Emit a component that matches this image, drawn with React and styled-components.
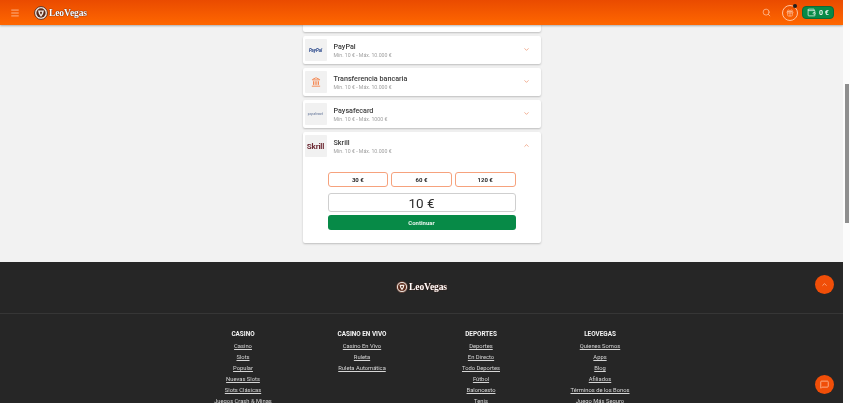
import React from 'react'
import styled, { createGlobalStyle } from 'styled-components'
import { Menu, Search, ChevronDown, ChevronUp, Landmark, Gift, Wallet, MessageSquare } from 'lucide-react'

const Global = createGlobalStyle`
  html, body {
    margin: 0;
    padding: 0;
    overflow: hidden;
  }
  body {
    font-family: Roboto, "Liberation Sans", sans-serif;
  }
`

const Shell = styled.div`
  position: relative;
  display: flex;
  width: 850px;
  height: 403px;
  overflow: hidden;
  background: #f2f2f2;
`

const Page = styled.div`
  position: relative;
  flex: 1;
  min-width: 0;
  height: 403px;
  overflow: hidden;
  will-change: opacity;
`

const Scrollbar = styled.div`
  flex: none;
  width: 7px;
  padding: 84px 1px 0 2px;
  box-sizing: border-box;
  background: #fcfcfc;
`

const Thumb = styled.div`
  width: 4px;
  height: 139px;
  background: #8f8f8f;
`

const Header = styled.header`
  position: absolute;
  top: 0;
  left: 0;
  right: 0;
  z-index: 5;
  height: 25px;
  display: flex;
  align-items: center;
  padding: 0 9px 0 10px;
  background: linear-gradient(180deg, #ea4b00 0%, #ff6700 100%);
  box-shadow: 0 1px 2px rgba(0, 0, 0, 0.3);
`

const Burger = styled.span`
  display: flex;
  color: #ffc4a0;
  margin-right: 14px;
`

const LogoMark = styled.span`
  display: flex;
  align-items: center;
  gap: 1px;
`

const LogoText = styled.span`
  font-family: "Liberation Serif", serif;
  font-weight: 700;
  font-size: ${p => p.$size}px;
  letter-spacing: -0.1px;
  color: #fff;
  text-shadow: 0 0 1px #4a2014, 0 0 1px #4a2014;
`

const HeaderRight = styled.div`
  margin-left: auto;
  display: flex;
  align-items: center;
`

const SearchIcon = styled.span`
  display: flex;
  color: #ffc4a0;
  margin-right: 11px;
`

const GiftButton = styled.span`
  position: relative;
  display: flex;
  align-items: center;
  justify-content: center;
  width: 14px;
  height: 14px;
  border: 1px solid #ffc4a0;
  border-radius: 50%;
  color: #ffc4a0;
  margin-right: 4px;
`

const GiftDot = styled.span`
  position: absolute;
  top: -2px;
  right: 0;
  width: 4px;
  height: 4px;
  border-radius: 50%;
  background: #1d1d1d;
`

const Balance = styled.span`
  display: flex;
  align-items: center;
  gap: 3px;
  height: 13px;
  width: 32px;
  box-sizing: border-box;
  padding-left: 4px;
  border-radius: 4px;
  background: #078a47;
  border: 1px solid #0b6b3a;
  color: #e6f5ec;
  font-size: 7px;
  font-weight: 700;
`

const Content = styled.main`
  width: 238px;
  margin: 0 auto;
  padding: 0 0 19px;
  display: flex;
  flex-direction: column;
  gap: 3.6px;
`

const Card = styled.section`
  background: #fff;
  border-radius: 2px;
  box-shadow: 0 1px 2px rgba(0, 0, 0, 0.22);
  flex: none;
  height: ${p => (p.$open ? '111px' : 'auto')};
  margin-top: ${p => p.$offset || 0}px;
`

const CardRow = styled.div`
  display: flex;
  align-items: center;
  height: 28.4px;
  padding: 0 11px 0 2px;
`

const LogoTile = styled.span`
  flex: none;
  width: 22px;
  height: 22px;
  display: flex;
  align-items: center;
  justify-content: center;
  background: #f1f1f1;
  border-radius: 1px;
  margin-right: 7px;
`

const MethodText = styled.div`
  flex: 1;
  display: flex;
  flex-direction: column;
  gap: 1px;
  padding-top: 1px;
`

const MethodName = styled.div`
  font-size: 7.2px;
  line-height: 9px;
  font-weight: 500;
  color: #3a3a3a;
`

const MethodLimit = styled.div`
  font-size: 5.2px;
  line-height: 7px;
  color: #a0a0a0;
`

const Chevron = styled.span`
  display: flex;
  color: #e9794a;
  margin-top: -2px;
`

const PayPalText = styled.span`
  font-size: 4.4px;
  font-weight: 700;
  font-style: italic;
  color: #1f3f86;
`

const PaysafeText = styled.span`
  font-size: 2.8px;
  font-weight: 500;
  color: #7b8aa8;
`

const SkrillText = styled.span`
  font-size: 8px;
  font-weight: 700;
  letter-spacing: -0.2px;
  color: #6e2b35;
`

const Deposit = styled.div`
  width: 188px;
  margin: 12px auto 0;
  display: flex;
  flex-direction: column;
`

const Amounts = styled.div`
  display: grid;
  grid-template-columns: repeat(3, 1fr);
  gap: 3px;
`

const Amount = styled.button`
  height: 15px;
  padding: 0;
  background: #fff;
  border: 1px solid #f6a27d;
  border-radius: 3px;
  font-family: inherit;
  font-size: 6px;
  font-weight: 700;
  color: #2a2a2a;
`

const AmountInput = styled.div`
  height: 19px;
  margin-top: 6px;
  box-sizing: border-box;
  display: flex;
  align-items: center;
  justify-content: center;
  border: 1px solid #cfcfcf;
  border-radius: 3px;
  font-size: 13.5px;
  color: #2d2d2d;
`

const Continue = styled.button`
  height: 15px;
  margin-top: 3px;
  padding: 0;
  border: 0;
  border-radius: 3px;
  background: #078a47;
  color: #e6f5ec;
  font-family: inherit;
  font-size: 6px;
  font-weight: 700;
`

const Footer = styled.footer`
  background: #262626;
  height: 300px;
`

const FooterLogo = styled.div`
  height: 51px;
  display: flex;
  align-items: center;
  justify-content: center;
  border-bottom: 1px solid #363636;
`

const FooterNav = styled.nav`
  display: grid;
  grid-template-columns: repeat(4, 119px);
  justify-content: center;
  padding-top: 15px;
`

const FooterCol = styled.div`
  display: flex;
  flex-direction: column;
  align-items: center;
`

const FooterHead = styled.div`
  font-size: 6.4px;
  line-height: 10px;
  margin-bottom: 2px;
  font-weight: 700;
  color: #f4f4f4;
`

const FooterLink = styled.a`
  font-size: 5.8px;
  line-height: 11.1px;
  color: #d6d6d6;
  text-decoration: underline;
  white-space: nowrap;
`

const Fab = styled.span`
  position: absolute;
  z-index: 6;
  left: 815px;
  top: ${p => p.$top}px;
  width: 19px;
  height: 19px;
  display: flex;
  align-items: center;
  justify-content: center;
  border-radius: 50%;
  background: #f04e08;
  color: #ffc9ac;
`

const Lion = ({ size }) => (
  <svg width={size} height={size} viewBox="0 0 24 24" aria-hidden="true">
    <circle cx="12" cy="12" r="11" fill="#f3ece6" stroke="#4a2014" strokeWidth="1.5" />
    <circle cx="12" cy="12" r="8" fill="#5a2a1a" />
    <path d="M7 7.5 L17 7.5 L15.5 13.5 L12 19 L8.5 13.5 Z" fill="#f3ece6" />
    <path d="M10 10 L14 10 L12.8 14 L11.2 14 Z" fill="#5a2a1a" />
  </svg>
)

const methods = [
  { name: 'PayPal', limit: 'Mín. 10 € - Máx. 10.000 €', logo: <PayPalText>PayPal</PayPalText> },
  { name: 'Transferencia bancaria', limit: 'Mín. 10 € - Máx. 10.000 €', logo: <Landmark size={10} color="#f58a55" strokeWidth={2.4} /> },
  { name: 'Paysafecard', limit: 'Mín. 10 € - Máx. 1000 €', logo: <PaysafeText>paysafecard</PaysafeText> },
]

const footerCols = [
  { head: 'CASINO', links: ['Casino', 'Slots', 'Popular', 'Nuevas Slots', 'Slots Clásicas', 'Juegos Crash & Minas'] },
  { head: 'CASINO EN VIVO', links: ['Casino En Vivo', 'Ruleta', 'Ruleta Automática'] },
  { head: 'DEPORTES', links: ['Deportes', 'En Directo', 'Todo Deportes', 'Fútbol', 'Baloncesto', 'Tenis'] },
  { head: 'LEOVEGAS', links: ['Quienes Somos', 'Apps', 'Blog', 'Afiliados', 'Términos de los Bonos', 'Juego Más Seguro'] },
]

export default function App() {
  return (
    <Shell>
      <Global />
      <Page>
        <Header>
          <Burger><Menu size={10} strokeWidth={2} /></Burger>
          <LogoMark>
            <Lion size={14} />
            <LogoText $size={9.5}>LeoVegas</LogoText>
          </LogoMark>
          <HeaderRight>
            <SearchIcon><Search size={9} strokeWidth={2} /></SearchIcon>
            <GiftButton>
              <Gift size={8} strokeWidth={2} />
              <GiftDot />
            </GiftButton>
            <Balance>
              <Wallet size={9} strokeWidth={2} />
              0 €
            </Balance>
          </HeaderRight>
        </Header>

        <Content>
          <Card $offset={4}><CardRow /></Card>
          {methods.map(m => (
            <Card key={m.name}>
              <CardRow>
                <LogoTile>{m.logo}</LogoTile>
                <MethodText>
                  <MethodName>{m.name}</MethodName>
                  <MethodLimit>{m.limit}</MethodLimit>
                </MethodText>
                <Chevron><ChevronDown size={7} strokeWidth={2} /></Chevron>
              </CardRow>
            </Card>
          ))}
          <Card $open>
            <CardRow>
              <LogoTile><SkrillText>Skrill</SkrillText></LogoTile>
              <MethodText>
                <MethodName>Skrill</MethodName>
                <MethodLimit>Mín. 10 € - Máx. 10.000 €</MethodLimit>
              </MethodText>
              <Chevron><ChevronUp size={7} strokeWidth={2} /></Chevron>
            </CardRow>
            <Deposit>
              <Amounts>
                <Amount>30 €</Amount>
                <Amount>60 €</Amount>
                <Amount>120 €</Amount>
              </Amounts>
              <AmountInput>10 €</AmountInput>
              <Continue>Continuar</Continue>
            </Deposit>
          </Card>
        </Content>

        <Footer>
          <FooterLogo>
            <LogoMark>
              <Lion size={12} />
              <LogoText $size={9.5}>LeoVegas</LogoText>
            </LogoMark>
          </FooterLogo>
          <FooterNav>
            {footerCols.map(col => (
              <FooterCol key={col.head}>
                <FooterHead>{col.head}</FooterHead>
                {col.links.map(l => <FooterLink key={l}>{l}</FooterLink>)}
              </FooterCol>
            ))}
          </FooterNav>
        </Footer>

        <Fab $top={275}><ChevronUp size={7} strokeWidth={2.4} /></Fab>
        <Fab $top={375}><MessageSquare size={9} strokeWidth={2} /></Fab>
      </Page>
      <Scrollbar><Thumb /></Scrollbar>
    </Shell>
  )
}
